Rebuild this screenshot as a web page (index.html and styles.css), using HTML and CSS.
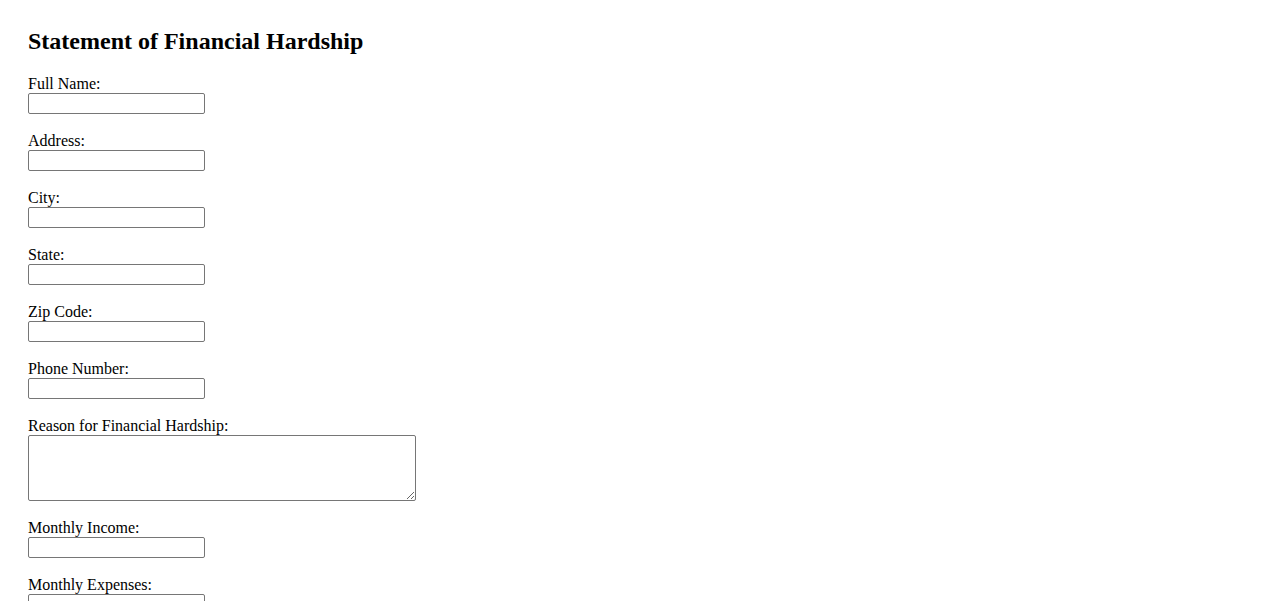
FILE: index.html
```html
<!DOCTYPE html>
<html lang="en">
<head>
<meta charset="utf-8">
<title>Statement of Financial Hardship</title>
<link rel="stylesheet" href="styles.css">
</head>
<body>
<div class="page">
  <h2 class="title">Statement of Financial Hardship</h2>
  <form class="form">
    <div class="field"><label class="label" for="name">Full Name:</label><input class="input" id="name" type="text"></div>
    <div class="field"><label class="label" for="address">Address:</label><input class="input" id="address" type="text"></div>
    <div class="field"><label class="label" for="city">City:</label><input class="input" id="city" type="text"></div>
    <div class="field"><label class="label" for="state">State:</label><input class="input" id="state" type="text"></div>
    <div class="field"><label class="label" for="zip">Zip Code:</label><input class="input" id="zip" type="text"></div>
    <div class="field"><label class="label" for="phone">Phone Number:</label><input class="input" id="phone" type="text"></div>
    <div class="field"><label class="label" for="reason">Reason for Financial Hardship:</label><textarea class="textarea" id="reason"></textarea></div>
    <div class="field"><label class="label" for="income">Monthly Income:</label><input class="input" id="income" type="text"></div>
    <div class="field"><label class="label" for="expenses">Monthly Expenses:</label><input class="input" id="expenses" type="text"></div>
  </form>
</div>
</body>
</html>
```
FILE: styles.css
```css
html {
  overflow: hidden;
}
body {
  margin: 8px;
  font-family: "Liberation Serif", "Times New Roman", serif;
  font-size: 16px;
  color: #000;
  background: #fff;
}
.page {
  padding: 20px;
}
.title {
  margin: 0 0 19.92px 0;
  font-size: 24px;
  font-weight: bold;
  line-height: 27.5px;
}
.form {
  margin: 0;
}
.field {
  margin-bottom: 18px;
}
.label {
  display: block;
  line-height: 18px;
}
.input {
  display: block;
  box-sizing: border-box;
  width: 177px;
  height: 21px;
  margin: 0;
  padding: 1px 2px;
  border: 1px solid #767676;
  border-radius: 2px;
  font-family: Arial, "Liberation Sans", sans-serif;
  font-size: 13.33px;
  background: #fff;
}
.textarea {
  display: block;
  box-sizing: border-box;
  width: 388px;
  height: 66px;
  margin: 0;
  padding: 2px;
  border: 1px solid #767676;
  border-radius: 2px;
  font-family: "Liberation Mono", monospace;
  font-size: 13.33px;
  background: #fff;
}
```
